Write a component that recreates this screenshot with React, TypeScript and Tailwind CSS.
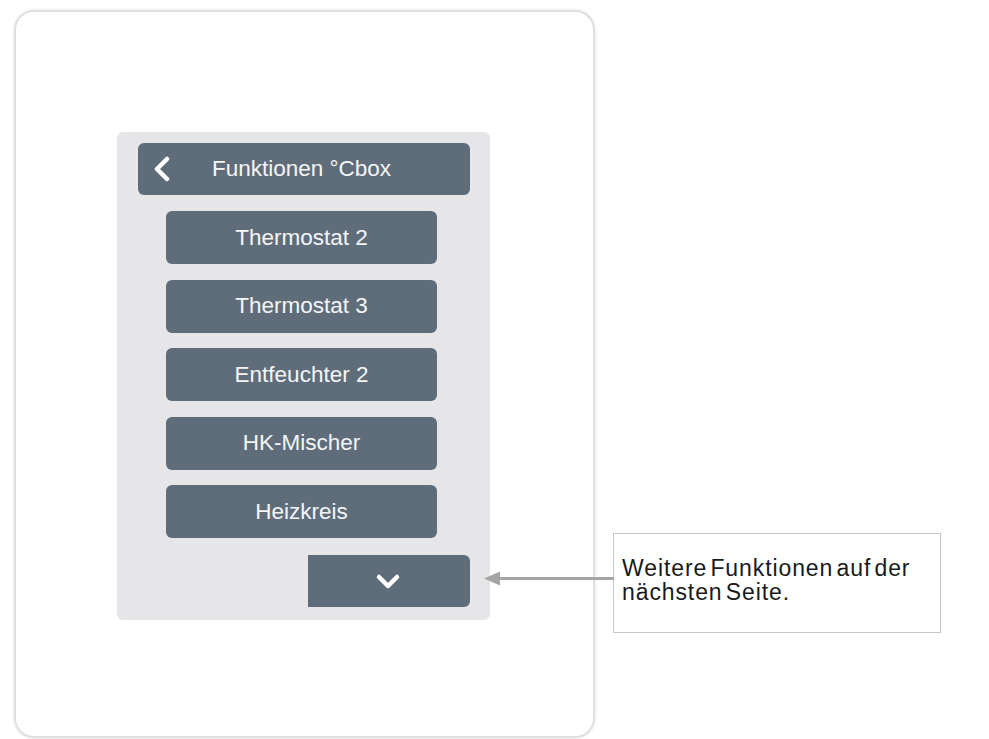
const items = ['Thermostat 2', 'Thermostat 3', 'Entfeuchter 2', 'HK-Mischer', 'Heizkreis'];

function MenuButton({ label }: { label: string }) {
  return (
    <div className="flex h-[53px] w-[271px] items-center justify-center rounded-[6px] bg-[#5f6d7b] text-[22.5px] text-[#f5f5f5]">
      {label}
    </div>
  );
}

export default function App() {
  return (
    <div className="relative h-[739px] w-[989px] overflow-hidden bg-white font-['Liberation_Sans',Arial,sans-serif]">
      <div className="flex items-start pl-[14px] pt-[10px]">
        {/* device screen */}
        <div className="h-[728px] w-[581px] rounded-[20px] border-2 border-[#e0e0e0] bg-white pl-[101px] pt-[120px] shadow-[0_0_3px_rgba(0,0,0,0.12)]">
          <div className="flex h-[488px] w-[373px] flex-col items-start rounded-[6px] bg-[#e6e6e8] pt-[11px]">
            <div className="ml-[21px] flex h-[52px] w-[332px] items-center rounded-[6px] bg-[#5f6d7b] text-[22.5px] text-[#f5f5f5]">
              <svg width="20" height="26" viewBox="0 0 20 26" className="ml-[14px] shrink-0">
                <path d="M15 3 L5 13 L15 23" fill="none" stroke="#ffffff" strokeWidth="4.5" strokeLinecap="round" strokeLinejoin="round" />
              </svg>
              <span className="ml-[40px]">Funktionen °Cbox</span>
            </div>
            <div className="ml-[49px] mt-[16px] flex flex-col gap-[15.5px]">
              {items.map((label) => (
                <MenuButton key={label} label={label} />
              ))}
            </div>
            <div className="ml-[191px] mt-[17px] flex h-[52px] w-[162px] items-center justify-center rounded-r-[6px] bg-[#5f6d7b]">
              <svg width="26" height="20" viewBox="0 0 26 20" className="-ml-[2px]">
                <path d="M4 6 L13 15 L22 6" fill="none" stroke="#ffffff" strokeWidth="4.5" strokeLinecap="round" strokeLinejoin="round" />
              </svg>
            </div>
          </div>
        </div>

        {/* callout */}
        <div className="ml-[18px] mt-[523px] h-[100px] w-[328px] border border-[#c6c6c6] bg-white pl-[8px] pt-[22px] text-[23px] leading-[24px] tracking-[0.9px] [word-spacing:-4px] text-[#1a1a1a]">
          Weitere Funktionen auf der
          <br />
          nächsten Seite.
        </div>
      </div>

      {/* pointer arrow */}
      <svg className="absolute left-[484px] top-[571px]" width="130" height="15" viewBox="0 0 130 15">
        <path d="M0 7.5 L16 0.5 L16 14.5 Z" fill="#a5a5a5" />
        <rect x="15" y="6" width="115" height="3" fill="#a5a5a5" />
      </svg>
    </div>
  );
}
